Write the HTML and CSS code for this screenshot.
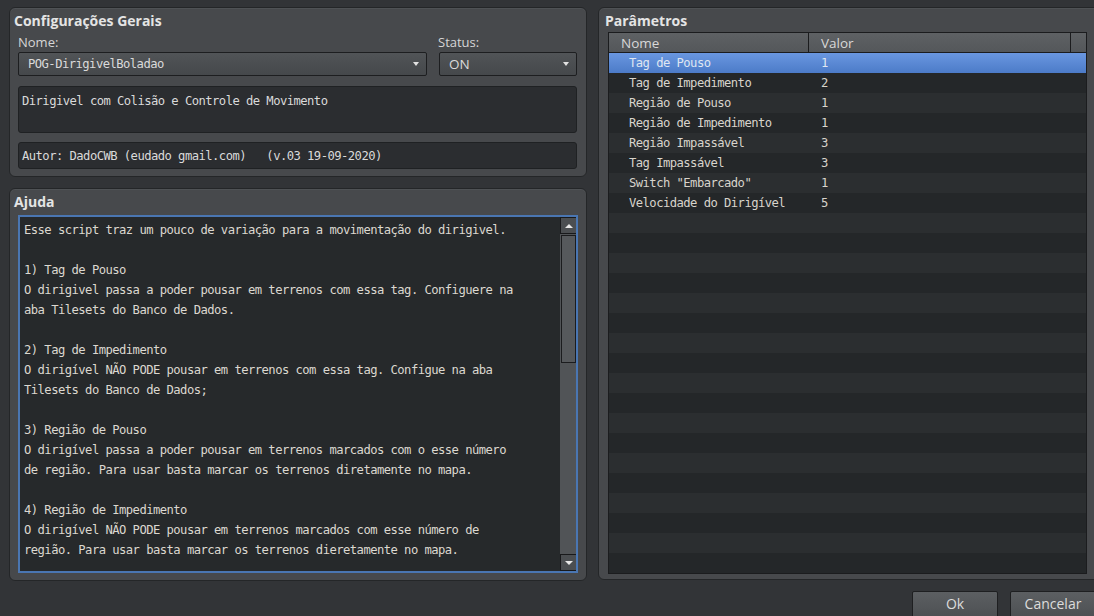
FILE: index.html
```html
<!DOCTYPE html>
<html lang="pt">
<head>
<meta charset="utf-8">
<title>Plugin</title>
<link rel="stylesheet" href="styles.css">
</head>
<body>
<div class="app">
  <div class="main">
    <div class="left">
      <section class="panel general">
        <h2 class="panel-title">Configurações Gerais</h2>
        <div class="field-labels"><span class="lbl-name">Nome:</span><span class="lbl-status">Status:</span></div>
        <div class="field-row">
          <div class="select select-name"><span class="mono">POG-DirigivelBoladao</span><span class="caret"></span></div>
          <div class="select select-status"><span class="sans">ON</span><span class="caret"></span></div>
        </div>
        <div class="textbox desc mono">Dirigivel com Colisão e Controle de Movimento</div>
        <div class="textbox author mono">Autor: DadoCWB (eudado gmail.com)   (v.03 19-09-2020)</div>
      </section>
      <section class="panel help">
        <h2 class="panel-title">Ajuda</h2>
        <div class="help-box">
          <div class="help-text mono">Esse script traz um pouco de variação para a movimentação do dirigivel.

1) Tag de Pouso
O dirigivel passa a poder pousar em terrenos com essa tag. Configuere na
aba Tilesets do Banco de Dados.

2) Tag de Impedimento
O dirigível NÃO PODE pousar em terrenos com essa tag. Configue na aba
Tilesets do Banco de Dados;

3) Região de Pouso
O dirigível passa a poder pousar em terrenos marcados com o esse número
de região. Para usar basta marcar os terrenos diretamente no mapa.

4) Região de Impedimento
O dirigível NÃO PODE pousar em terrenos marcados com esse número de
região. Para usar basta marcar os terrenos dieretamente no mapa.</div>
          <div class="scrollbar">
            <div class="sb-btn"><span class="tri-up"></span></div>
            <div class="sb-track"><div class="sb-thumb"></div></div>
            <div class="sb-btn"><span class="tri-down"></span></div>
          </div>
        </div>
      </section>
    </div>
    <section class="panel params">
      <h2 class="panel-title">Parâmetros</h2>
      <div class="table">
        <div class="thead">
          <div class="th c-name">Nome</div>
          <div class="th c-val">Valor</div>
          <div class="th c-corner"></div>
        </div>
        <div class="tbody">
          <div class="row selected"><div class="td c-name">Tag de Pouso</div><div class="td c-val">1</div></div>
          <div class="row"><div class="td c-name">Tag de Impedimento</div><div class="td c-val">2</div></div>
          <div class="row"><div class="td c-name">Região de Pouso</div><div class="td c-val">1</div></div>
          <div class="row"><div class="td c-name">Região de Impedimento</div><div class="td c-val">1</div></div>
          <div class="row"><div class="td c-name">Região Impassável</div><div class="td c-val">3</div></div>
          <div class="row"><div class="td c-name">Tag Impassável</div><div class="td c-val">3</div></div>
          <div class="row"><div class="td c-name">Switch "Embarcado"</div><div class="td c-val">1</div></div>
          <div class="row"><div class="td c-name">Velocidade do Dirigível</div><div class="td c-val">5</div></div>
          <div class="row"></div><div class="row"></div><div class="row"></div><div class="row"></div>
          <div class="row"></div><div class="row"></div><div class="row"></div><div class="row"></div>
          <div class="row"></div><div class="row"></div><div class="row"></div><div class="row"></div>
          <div class="row"></div><div class="row"></div><div class="row"></div><div class="row"></div>
          <div class="row"></div><div class="row"></div>
        </div>
      </div>
    </section>
  </div>
  <div class="buttons">
    <button class="btn">Ok</button>
    <button class="btn">Cancelar</button>
  </div>
</div>
</body>
</html>
```
FILE: styles.css
```css
* { box-sizing: border-box; }

html, body {
  margin: 0;
  padding: 0;
  background: #323437;
  overflow: hidden;
  width: 1094px;
  height: 616px;
}

body {
  font-family: "Open Sans", "Noto Sans", sans-serif;
  color: #d8d8d8;
}

.mono {
  font-family: "DejaVu Sans Mono", monospace;
  font-size: 12.2px;
  letter-spacing: -0.55px;
}

.sans {
  font-family: "Open Sans", sans-serif;
  font-size: 13.5px;
}

.app {
  padding: 7px 0 0 9px;
  width: 1110px;
}

.main {
  display: flex;
  gap: 11px;
  height: 574px;
}

.left {
  width: 578px;
  display: flex;
  flex-direction: column;
  gap: 11px;
}

.panel {
  background: #47494c;
  border: 1px solid #242628;
  border-radius: 6px;
  padding: 3px 9px 7px 8px;
  box-shadow: inset 0 1px 0 #4f5255;
}

.panel-title {
  margin: 0 0 0 -4px;
  font-size: 14px;
  font-weight: 700;
  line-height: 20px;
  color: #e4e4e4;
}

.general {
  height: 170px;
}

.field-labels {
  display: flex;
  margin-top: 2px;
  height: 19px;
  font-size: 13px;
  line-height: 18px;
  color: #d6d6d6;
}

.lbl-name { width: 420px; }

.field-row {
  display: flex;
  gap: 12px;
}

.select {
  height: 24px;
  display: flex;
  align-items: center;
  justify-content: space-between;
  background: linear-gradient(#515457, #45484b);
  border: 1px solid #1d1e20;
  border-radius: 2px;
  padding: 0 7px 0 9px;
  color: #dadada;
}

.select-name { width: 409px; }
.select-status { width: 138px; }

.caret {
  width: 0;
  height: 0;
  border-left: 3.5px solid transparent;
  border-right: 3.5px solid transparent;
  border-top: 4px solid #e2e2e2;
}

.textbox {
  background: #2b2d30;
  border: 1px solid #1f2123;
  border-radius: 3px;
  color: #dadada;
  white-space: pre;
  padding: 0 3px;
}

.desc {
  margin-top: 10px;
  height: 47px;
  padding-top: 4px;
  line-height: 20px;
}

.author {
  margin-top: 9px;
  height: 27px;
  line-height: 26px;
}

.help {
  flex: 1;
  display: flex;
  flex-direction: column;
}

.help-box {
  margin-top: 3px;
  height: 358px;
  width: 560px;
  border: 2px solid #4a76b2;
  background: #26292b;
  display: flex;
  overflow: hidden;
}

.help-text {
  flex: 1;
  white-space: pre;
  line-height: 20px;
  padding: 3px 0 0 4px;
  color: #dcd8d0;
}

.scrollbar {
  width: 17px;
  display: flex;
  flex-direction: column;
  background: #515457;
  margin-right: -1px;
}

.sb-btn {
  height: 17px;
  border: 1px solid #18191b;
  background: #4b4e51;
  display: flex;
  align-items: center;
  justify-content: center;
}

.tri-up, .tri-down {
  width: 0;
  height: 0;
  border-left: 4px solid transparent;
  border-right: 4px solid transparent;
}

.tri-up { border-bottom: 4px solid #e8e8e8; }
.tri-down { border-top: 4px solid #e8e8e8; }

.sb-track {
  flex: 1;
  padding: 1px 1px 0 1px;
}

.sb-thumb {
  height: 128px;
  border: 1px solid #1b1c1e;
  background: #56595c;
}

.params {
  width: 505px;
  height: 573px;
  padding-left: 9px;
  overflow: hidden;
}

.params .panel-title {
  margin-left: -3px;
}

.table {
  margin-top: 1px;
  width: 479px;
  border: 1px solid #1b1c1e;
  background: #26292b;
}

.thead {
  display: flex;
  height: 20px;
  border-bottom: 1px solid #1b1c1e;
  background: linear-gradient(#5e6164, #54575a);
}

.th {
  font-size: 13.5px;
  line-height: 20px;
  color: #d8d8d8;
  border-right: 1px solid #1b1c1e;
}

.thead .c-name { width: 200px; padding-left: 12px; }
.thead .c-val { width: 262px; padding-left: 12px; }
.thead .c-corner { flex: 1; border-right: 0; }

.row {
  display: flex;
  height: 20px;
  background: #2b2e30;
  font-family: "DejaVu Sans Mono", monospace;
  font-size: 12.2px;
  letter-spacing: -0.55px;
  line-height: 21px;
  color: #d8d4cc;
}

.row:nth-child(even) { background: #242729; }

.row.selected {
  background: linear-gradient(#6a97e0, #4c7bc8);
  color: #dfe6f2;
}

.td.c-name { width: 200px; padding-left: 20px; }
.td.c-val { padding-left: 12px; }

.buttons {
  width: 1087px;
  margin-top: 10px;
  display: flex;
  justify-content: flex-end;
  gap: 12px;
}

.btn {
  width: 86px;
  height: 27px;
  border: 1px solid #1e1f21;
  border-radius: 2px;
  background: linear-gradient(#5c5f62, #4d5053);
  color: #dcdcdc;
  font-family: "Open Sans", sans-serif;
  font-size: 14px;
  padding: 0 0 2px 0;
}
```
